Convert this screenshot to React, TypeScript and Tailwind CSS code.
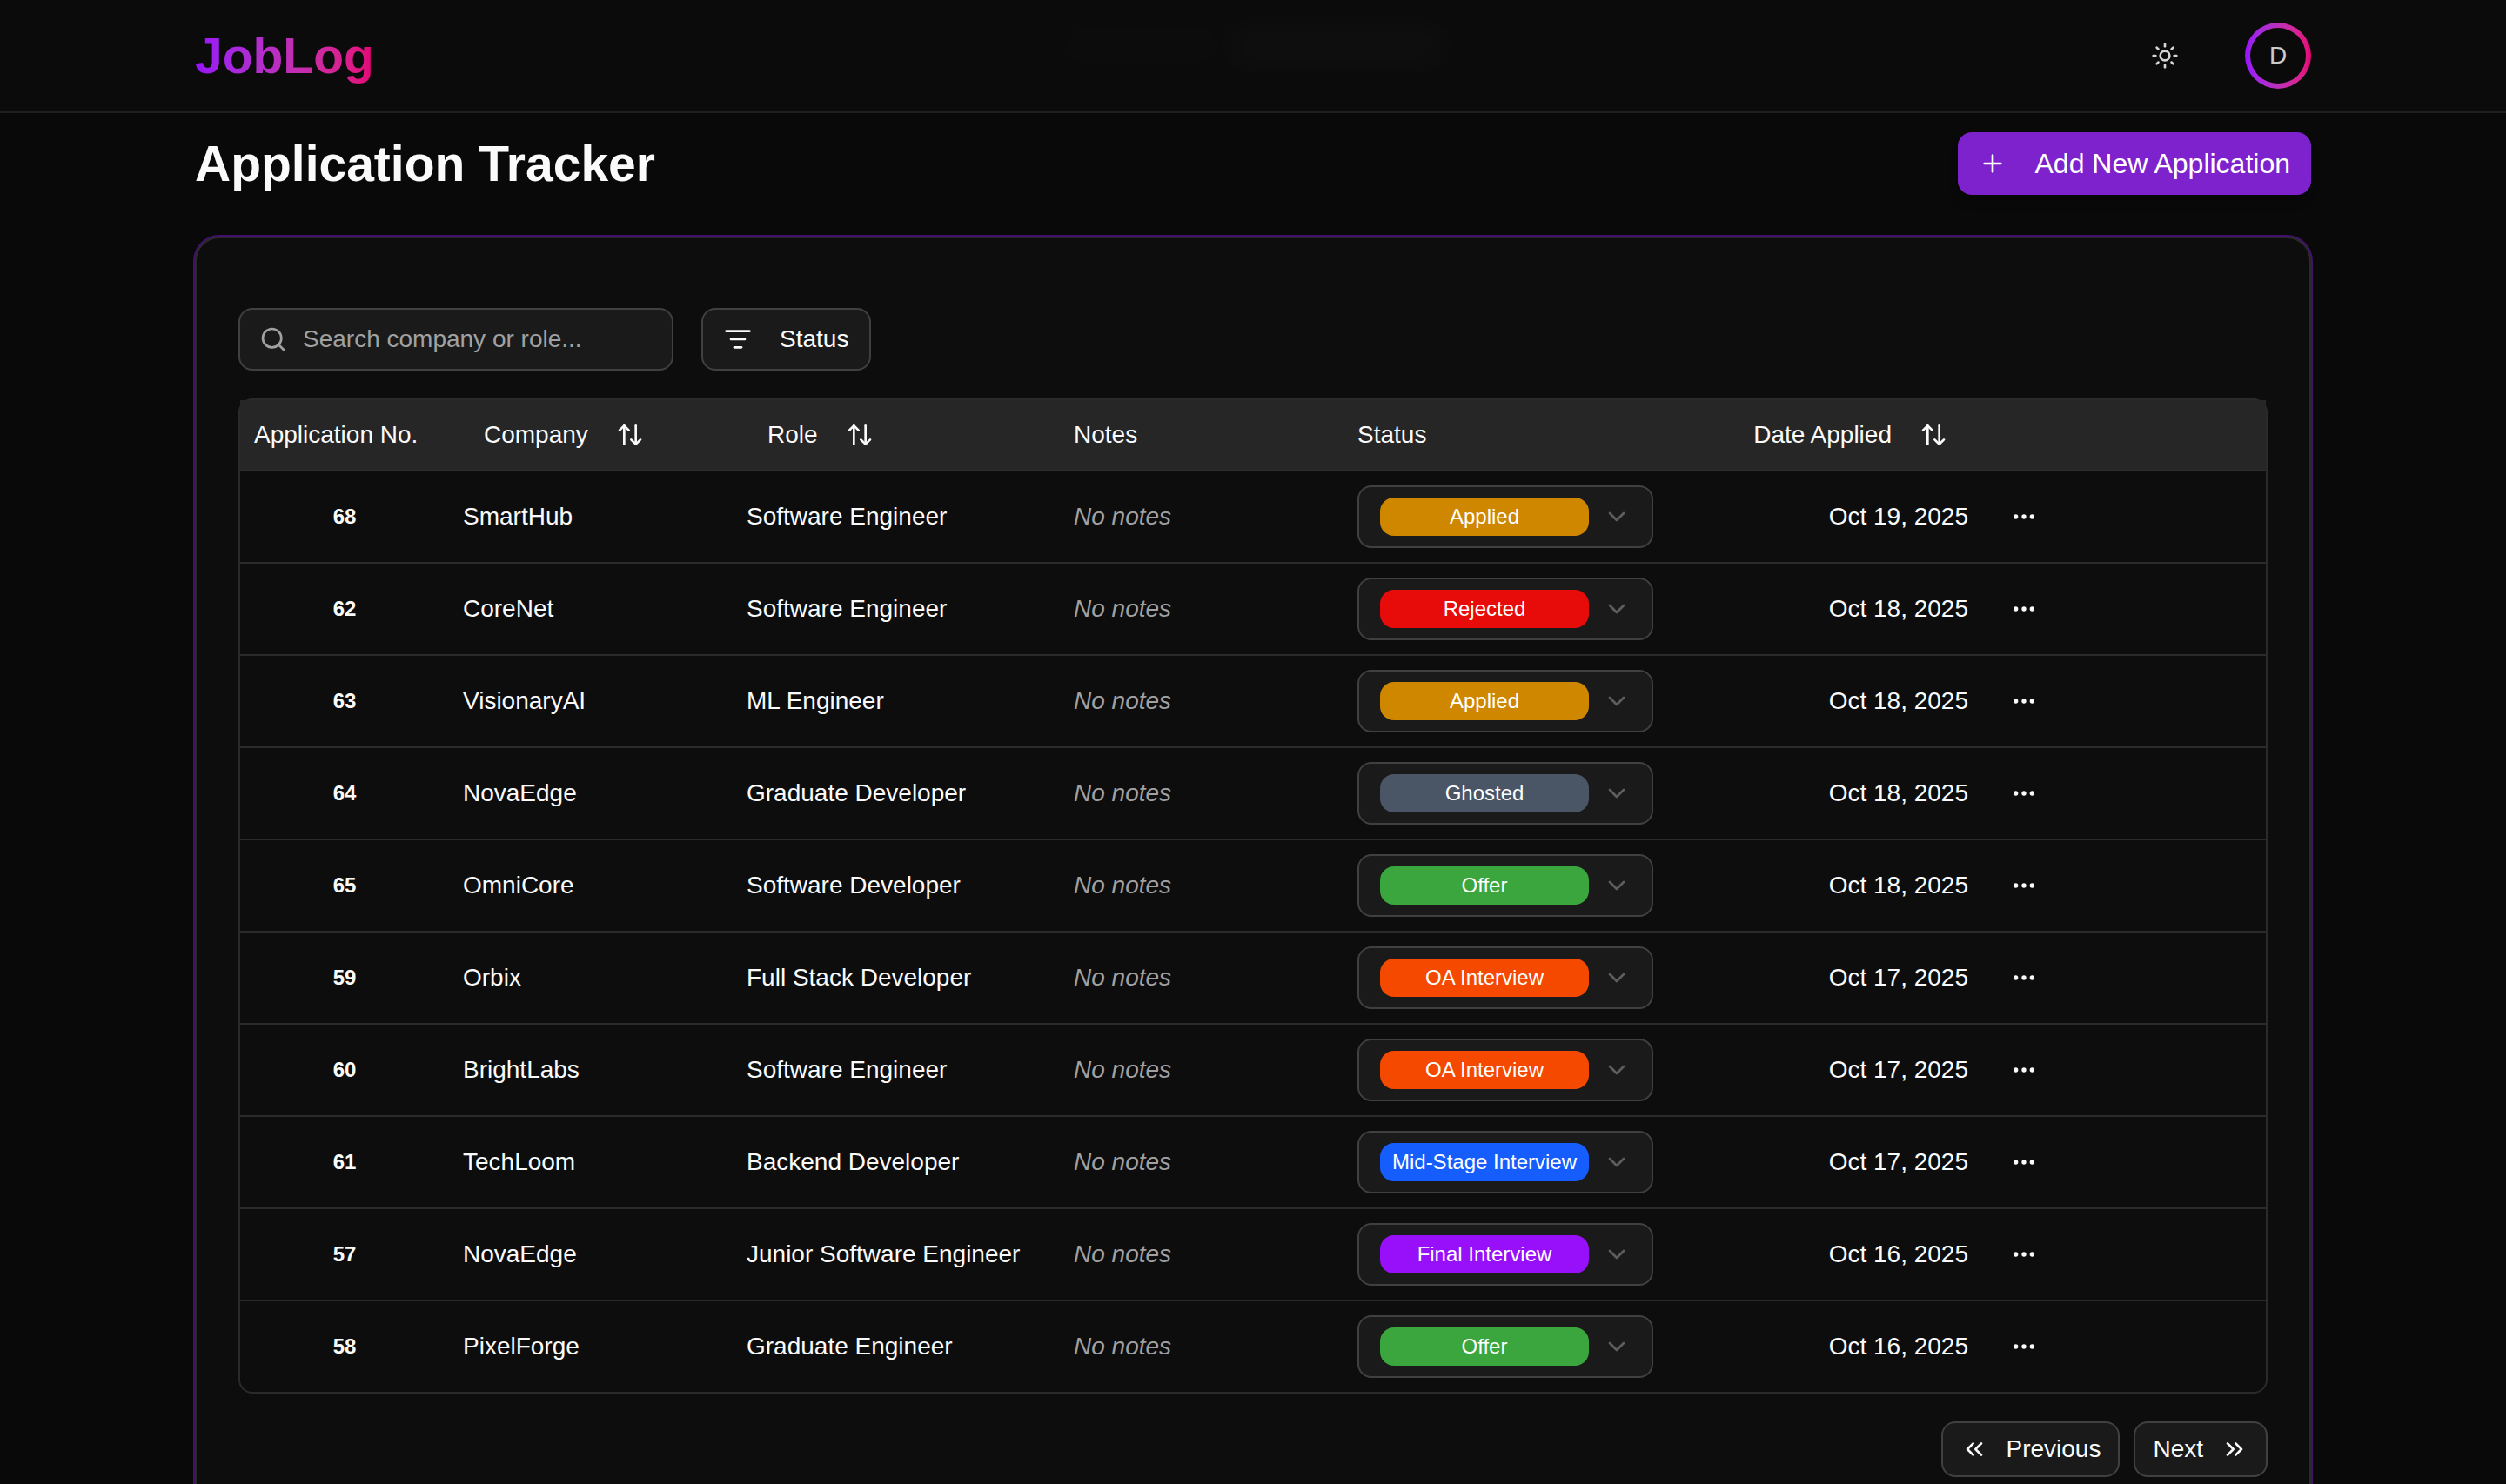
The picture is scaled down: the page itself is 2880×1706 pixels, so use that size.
import {
  ArrowUpDown,
  ChevronDown,
  ChevronsLeft,
  ChevronsRight,
  Ellipsis,
  ListFilter,
  Plus,
  Search,
  Sun,
} from "lucide-react";

type Status =
  | "Applied"
  | "Rejected"
  | "Ghosted"
  | "Offer"
  | "OA Interview"
  | "Mid-Stage Interview"
  | "Final Interview";

interface Application {
  id: number;
  company: string;
  role: string;
  status: Status;
  date: string;
}

const statusColors: Record<Status, string> = {
  Applied: "bg-[#d08700]",
  Rejected: "bg-[#e70b09]",
  Ghosted: "bg-[#4a5565]",
  Offer: "bg-[#3aa63d]",
  "OA Interview": "bg-[#f54900]",
  "Mid-Stage Interview": "bg-[#155dfc]",
  "Final Interview": "bg-[#9810fa]",
};

const statuses = Object.keys(statusColors) as Status[];

const applications: Application[] = [
  { id: 68, company: "SmartHub", role: "Software Engineer", status: "Applied", date: "Oct 19, 2025" },
  { id: 62, company: "CoreNet", role: "Software Engineer", status: "Rejected", date: "Oct 18, 2025" },
  { id: 63, company: "VisionaryAI", role: "ML Engineer", status: "Applied", date: "Oct 18, 2025" },
  { id: 64, company: "NovaEdge", role: "Graduate Developer", status: "Ghosted", date: "Oct 18, 2025" },
  { id: 65, company: "OmniCore", role: "Software Developer", status: "Offer", date: "Oct 18, 2025" },
  { id: 59, company: "Orbix", role: "Full Stack Developer", status: "OA Interview", date: "Oct 17, 2025" },
  { id: 60, company: "BrightLabs", role: "Software Engineer", status: "OA Interview", date: "Oct 17, 2025" },
  { id: 61, company: "TechLoom", role: "Backend Developer", status: "Mid-Stage Interview", date: "Oct 17, 2025" },
  { id: 57, company: "NovaEdge", role: "Junior Software Engineer", status: "Final Interview", date: "Oct 16, 2025" },
  { id: 58, company: "PixelForge", role: "Graduate Engineer", status: "Offer", date: "Oct 16, 2025" },
];

function Navbar() {
  return (
    <header className="relative shrink-0 border-b-2 border-[#1f1f1f] bg-[#0b0b0b]">
      <div aria-hidden="true" className="absolute inset-x-0 top-4 flex h-18 items-center justify-center">
        <div className="h-10 w-48 rounded-full bg-white/[0.012] blur-lg" />
        <div className="h-12 w-64 rounded-full bg-white/[0.018] blur-lg" />
      </div>
      <div className="relative mx-auto flex h-32 max-w-[2560px] items-center justify-between px-16">
        <a
          href="#"
          className="bg-linear-to-r from-[#9810fa] to-[#e60076] bg-clip-text text-[57px] leading-[72px] font-bold text-transparent"
        >
          JobLog
        </a>
        <div className="flex items-center gap-14">
          <button
            type="button"
            aria-label="Toggle theme"
            className="flex size-18 items-center justify-center rounded-2xl text-[#d4d4d4]"
          >
            <Sun className="size-8" />
          </button>
          <button
            type="button"
            aria-label="Account"
            className="size-19 rounded-full bg-linear-to-r from-[#9810fa] to-[#e60076] p-1.5"
          >
            <span className="flex size-full items-center justify-center rounded-full bg-[#0a0a0a] text-[28px] leading-10 text-[#cccccc]">
              D
            </span>
          </button>
        </div>
      </div>
    </header>
  );
}

function Toolbar() {
  return (
    <div className="flex items-center gap-8">
      <label className="flex h-18 w-[500px] items-center gap-[18px] rounded-2xl border-2 border-[#404040] bg-[#1a1a1a] px-[22px]">
        <Search className="size-8 shrink-0 text-[#a1a1a1]" />
        <input
          type="text"
          aria-label="Search company or role"
          placeholder="Search company or role..."
          className="min-w-0 flex-1 bg-transparent text-[28px] leading-10 outline-none placeholder:text-[#a1a1a1]"
        />
      </label>
      <button
        type="button"
        className="flex h-18 items-center gap-8 rounded-2xl border-2 border-[#404040] bg-[#1a1a1a] px-6 text-[28px] leading-10"
      >
        <ListFilter className="size-8" />
        Status
      </button>
    </div>
  );
}

function SortButton({ label }: { label: string }) {
  return (
    <button type="button" className="inline-flex h-16 items-center gap-8 px-6 align-middle">
      {label}
      <ArrowUpDown className="size-8" />
    </button>
  );
}

function StatusSelect({ id, status }: { id: number; status: Status }) {
  return (
    <label className="flex h-18 w-[340px] items-center gap-4 rounded-2xl border-2 border-[#404040] bg-[#1a1a1a] px-6">
      <select
        aria-label={`Status of application ${id}`}
        defaultValue={status}
        className={`h-11 w-60 appearance-none rounded-2xl text-center text-[24px] leading-8 text-white ${statusColors[status]}`}
      >
        {statuses.map((s) => (
          <option key={s} value={s}>
            {s}
          </option>
        ))}
      </select>
      <ChevronDown className="size-8 shrink-0 text-[#a1a1a1] opacity-50" />
    </label>
  );
}

function ApplicationTable() {
  return (
    <div className="mt-8 rounded-2xl border-2 border-[#2a2a2a]">
      <table className="w-full table-fixed text-left text-[28px] leading-10">
        <colgroup>
          <col className="w-[240px]" />
          <col className="w-[326px]" />
          <col className="w-[376px]" />
          <col className="w-[326px]" />
          <col />
          <col className="w-[326px]" />
          <col className="w-[326px]" />
        </colgroup>
        <thead className="bg-[#262626]">
          <tr className="h-[81px] border-b-2 border-[#2e2e2e]">
            <th className="px-4 py-0 font-normal whitespace-nowrap">Application No.</th>
            <th className="px-4 py-0 font-normal">
              <SortButton label="Company" />
            </th>
            <th className="px-4 py-0 font-normal">
              <SortButton label="Role" />
            </th>
            <th className="px-4 py-0 font-normal">Notes</th>
            <th className="px-4 py-0 font-normal">Status</th>
            <th className="px-4 py-0 text-right font-normal whitespace-nowrap">
              <SortButton label="Date Applied" />
            </th>
            <th className="px-4 py-0" aria-label="Actions" />
          </tr>
        </thead>
        <tbody>
          {applications.map((app) => (
            <tr key={app.id} className="border-b-2 border-[#2a2a2a] last:border-b-0">
              <td className="p-4 text-center text-[24px] leading-8 font-bold">{app.id}</td>
              <td className="p-4">{app.company}</td>
              <td className="p-4 whitespace-nowrap">{app.role}</td>
              <td className="p-4 text-[#a1a1a1] italic">No notes</td>
              <td className="p-4">
                <StatusSelect id={app.id} status={app.status} />
              </td>
              <td className="p-4 text-right">{app.date}</td>
              <td className="p-4">
                <button
                  type="button"
                  aria-label={`Actions for application ${app.id}`}
                  className="flex size-16 items-center justify-center"
                >
                  <Ellipsis className="size-8" />
                </button>
              </td>
            </tr>
          ))}
        </tbody>
      </table>
    </div>
  );
}

function Pagination() {
  return (
    <nav aria-label="Pagination" className="mt-8 flex justify-end gap-4 text-[28px] leading-10">
      <button
        type="button"
        className="flex h-16 items-center gap-5 rounded-2xl border-2 border-[#404040] bg-[#1a1a1a] px-5"
      >
        <ChevronsLeft className="size-8" />
        Previous
      </button>
      <button
        type="button"
        className="flex h-16 items-center gap-5 rounded-2xl border-2 border-[#404040] bg-[#1a1a1a] px-5"
      >
        Next
        <ChevronsRight className="size-8" />
      </button>
    </nav>
  );
}

export default function App() {
  return (
    <div className="flex h-screen flex-col overflow-hidden bg-[#090909] font-['Liberation_Sans',Arial,sans-serif] text-[#fafafa]">
      <Navbar />
      <main className="mx-auto w-full max-w-[2560px] px-16 pt-[22px]">
        <div className="flex items-center justify-between">
          <h1 className="text-[57px] leading-[72px] font-bold">Application Tracker</h1>
          <button
            type="button"
            className="flex h-18 items-center gap-8 rounded-2xl bg-[#7e22ce] px-6 text-[32px] leading-12 text-white shadow-lg"
          >
            <Plus className="size-8" />
            Add New Application
          </button>
        </div>
        <section className="mt-12 rounded-[28px] border-2 border-[#2a2a2a] bg-[#0d0d0d] px-12 py-20 ring-2 ring-[#42116b]">
          <Toolbar />
          <ApplicationTable />
          <Pagination />
        </section>
      </main>
    </div>
  );
}
